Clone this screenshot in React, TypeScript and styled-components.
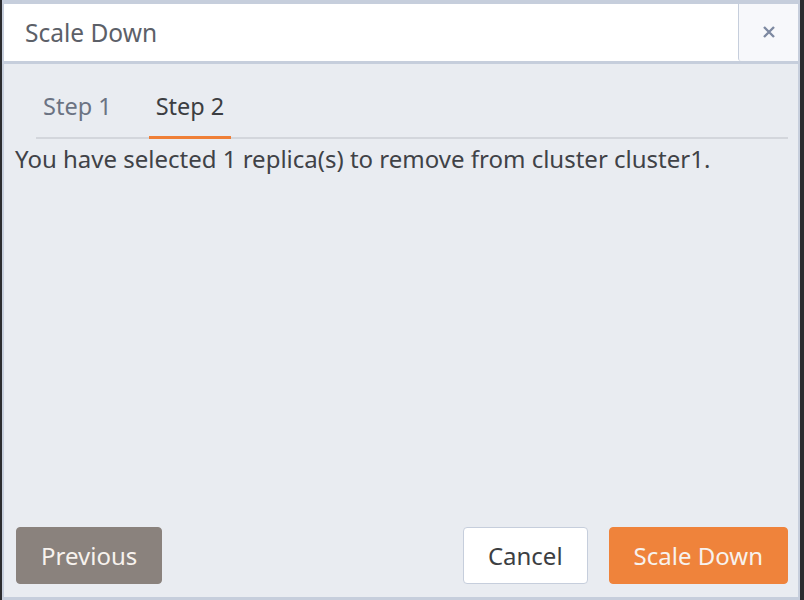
import React from 'react';
import styled, { createGlobalStyle } from 'styled-components';

const GlobalStyle = createGlobalStyle`
  html, body {
    margin: 0;
    padding: 0;
    background: #2b2b2e;
  }
  * {
    box-sizing: border-box;
  }
`;

const Frame = styled.div`
  width: 804px;
  height: 600px;
  padding: 0 4px 0 2px;
  background: #2b2b2e;
  display: flex;
`;

const Dialog = styled.div`
  flex: 1;
  display: flex;
  flex-direction: column;
  border: 2px solid #c6cedc;
  border-top-width: 4px;
  border-bottom-width: 3px;
  background: #e9ecf1;
  font-family: 'Noto Sans', 'Open Sans', sans-serif;
`;

const Header = styled.div`
  display: flex;
  height: 60px;
  background: #fff;
  border-bottom: 3px solid #c6cedc;
  flex-shrink: 0;
`;

const Title = styled.div`
  flex: 1;
  display: flex;
  align-items: center;
  padding-left: 21px;
  font-size: 24.5px;
  color: #5c6068;
`;

const CloseButton = styled.button`
  width: 60px;
  border: 0;
  border-left: 1px solid #c6cedc;
  border-bottom-left-radius: 3px;
  background: #f7f8fb;
  color: #7d89a1;
  display: flex;
  align-items: center;
  justify-content: center;
  padding: 0 0 2px 0;
  cursor: pointer;
`;

const Body = styled.div`
  flex: 1;
  display: flex;
  flex-direction: column;
  padding: 0 10px 13px 11px;
`;

const TabBar = styled.div`
  display: flex;
  gap: 30px;
  margin: 23px 0 0 21px;
  border-bottom: 2px solid #d3d6dc;
`;

const Tab = styled.div<{ $active?: boolean }>`
  padding: 8px 7px 17px 7px;
  margin-bottom: -2px;
  font-size: 23.5px;
  line-height: 1;
  color: ${p => (p.$active ? '#3c3e42' : '#6b7383')};
  border-bottom: 3px solid ${p => (p.$active ? '#ef7f37' : 'transparent')};
`;

const Message = styled.p`
  margin: 8px 0 0 0;
  font-size: 24px;
  line-height: 1;
  color: #404247;
`;

const Footer = styled.div`
  margin-top: auto;
  display: flex;
  align-items: center;
  gap: 21px;
  padding-left: 1px;
`;

const Button = styled.button<{ $kind: 'back' | 'plain' | 'primary' }>`
  height: 57px;
  padding: 0 24px;
  border-radius: 4px;
  font-family: inherit;
  font-size: 24px;
  cursor: pointer;
  border: 1px solid
    ${p => (p.$kind === 'plain' ? '#c6cedc' : p.$kind === 'primary' ? '#ef833b' : '#8a827d')};
  background: ${p => (p.$kind === 'plain' ? '#fff' : p.$kind === 'primary' ? '#ef833b' : '#8a827d')};
  color: ${p => (p.$kind === 'plain' ? '#3c3e42' : '#f7f2ee')};
`;

const Spacer = styled.div`
  flex: 1;
`;

export default function App() {
  return (
    <Frame>
      <GlobalStyle />
      <Dialog>
        <Header>
          <Title>Scale Down</Title>
          <CloseButton aria-label="close">
            <svg width="14" height="14" viewBox="0 0 14 14">
              <path d="M2 2 L12 12 M12 2 L2 12" stroke="currentColor" strokeWidth="2.4" />
            </svg>
          </CloseButton>
        </Header>
        <Body>
          <TabBar>
            <Tab>Step 1</Tab>
            <Tab $active>Step 2</Tab>
          </TabBar>
          <Message>You have selected 1 replica(s) to remove from cluster cluster1.</Message>
          <Footer>
            <Button $kind="back">Previous</Button>
            <Spacer />
            <Button $kind="plain">Cancel</Button>
            <Button $kind="primary">Scale Down</Button>
          </Footer>
        </Body>
      </Dialog>
    </Frame>
  );
}
